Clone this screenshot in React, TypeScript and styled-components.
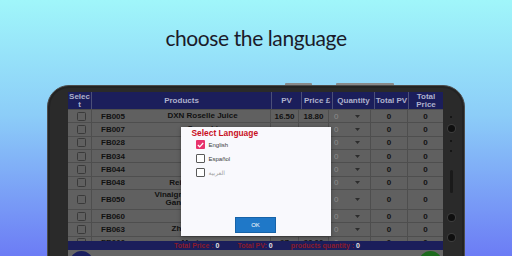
import styled, { createGlobalStyle } from "styled-components";

type product = {
  code: string;
  name: string;
  pv: string;
  price: string;
  tall?: boolean;
};

const products: product[] = [
  { code: "FB005", name: "DXN Roselle Juice", pv: "16.50", price: "18.80" },
  { code: "FB007", name: "Cocozhi", pv: "12.00", price: "14.20" },
  { code: "FB028", name: "Morinzhi", pv: "21.00", price: "24.60" },
  { code: "FB034", name: "Spica Tea", pv: "9.50", price: "11.40" },
  { code: "FB044", name: "Lingzhi", pv: "14.00", price: "16.30" },
  { code: "FB048", name: "Reishi Coffee Mix", pv: "18.00", price: "20.90" },
  {
    code: "FB050",
    name: "Vinaigrette Dressing with\nGanoderma Extract",
    pv: "11.00",
    price: "13.10",
    tall: true,
  },
  { code: "FB060", name: "Zhi Mocha", pv: "15.00", price: "17.50" },
  { code: "FB063", name: "Zhi Cafe Classic", pv: "15.00", price: "17.50" },
  { code: "FB066", name: "Morinzyme", pv: "27", price: "33.00" },
];

const GlobalStyle = createGlobalStyle`
  html, body {
    margin: 0;
    padding: 0;
  }
  body {
    width: 512px;
    height: 256px;
    overflow: hidden;
    font-family: "Liberation Sans", Arial, sans-serif;
  }
`;

const Page = styled.div`
  width: 512px;
  height: 256px;
  overflow: hidden;
  background: linear-gradient(180deg, #a0f6fa 0%, #8ccdf8 45%, #6c7cf5 100%);
  display: flex;
  flex-direction: column;
  align-items: center;
`;

const Title = styled.h1`
  margin: 22.5px 0 0;
  font-family: Lato, "Open Sans", sans-serif;
  font-weight: 400;
  font-size: 21px;
  letter-spacing: -0.4px;
  line-height: 29px;
  color: #1b1b2a;
`;

const Phone = styled.div`
  position: relative;
  flex-shrink: 0;
  box-sizing: border-box;
  margin-top: 33.5px;
  width: 418px;
  height: 230px;
  display: flex;
  background: #2a2a2a;
  border: 1px solid #4c4c4c;
  border-radius: 22px;
  box-shadow: inset 0 0 0 2px #232323;
`;

const SideKey = styled.span<{ $left: number; $width: number }>`
  position: absolute;
  top: -3px;
  left: ${(p) => p.$left}px;
  width: ${(p) => p.$width}px;
  height: 2px;
  border-radius: 1px 1px 0 0;
  background: #8a8a8a;
`;

const LeftBezel = styled.div`
  width: 20px;
  flex-shrink: 0;
`;

const RightBezel = styled.div`
  width: 21px;
  flex-shrink: 0;
  box-sizing: border-box;
  padding-right: 5px;
  display: flex;
  flex-direction: column;
  align-items: center;
`;

const Sensor = styled.span<{ $size: number; $top: number; $ring?: boolean }>`
  display: block;
  flex-shrink: 0;
  margin-top: ${(p) => p.$top}px;
  width: ${(p) => p.$size}px;
  height: ${(p) => p.$size}px;
  border-radius: 50%;
  background: #0f0f0f;
  box-shadow: ${(p) => (p.$ring ? "0 0 0 1px #3d3d3d" : "none")};
`;

const Slot = styled.span`
  display: block;
  margin-top: 18px;
  width: 3px;
  height: 23px;
  border-radius: 2px;
  background: #1a1a1a;
`;

const Screen = styled.div`
  position: relative;
  margin-top: 6px;
  width: 375px;
  height: 220px;
  flex-shrink: 0;
  display: flex;
  flex-direction: column;
  background: #636363;
  overflow: hidden;
`;

const HeaderRow = styled.div`
  display: grid;
  grid-template-columns: 23px 179px 29px 30px 41px 33px 34px;
  gap: 1px;
  height: 17px;
  background: #4b4f78;
`;

const HeadCell = styled.div<{ $breakAll?: boolean }>`
  display: flex;
  align-items: center;
  justify-content: center;
  text-align: center;
  background: #1b1e5b;
  color: #aeb1cc;
  font-size: 8px;
  font-weight: 700;
  line-height: 8px;
  word-break: ${(p) => (p.$breakAll ? "break-all" : "normal")};
`;

const Body = styled.div`
  height: 132px;
  flex-shrink: 0;
  overflow: hidden;
  padding-top: 1px;
  box-sizing: border-box;
  display: flex;
  flex-direction: column;
  gap: 1px;
  background: #4e4e4e;
`;

const Row = styled.div<{ $tall?: boolean }>`
  display: grid;
  grid-template-columns: 23px 178px 27px 29px 41px 36px 35px;
  gap: 1px;
  flex-shrink: 0;
  height: ${(p) => (p.$tall ? "19px" : "12.33px")};
`;

const Cell = styled.div<{ $align?: "start" | "center" }>`
  display: flex;
  align-items: center;
  justify-content: ${(p) => (p.$align === "start" ? "flex-start" : "center")};
  background: #606060;
  color: #111;
  font-size: 8px;
  font-weight: 700;
  white-space: nowrap;
`;

const CheckCell = styled(Cell)`
  padding-left: 4px;
`;

const Box = styled.span`
  width: 9px;
  height: 9px;
  box-sizing: border-box;
  border: 1px solid #3a3a3a;
  border-radius: 1.5px;
`;

const ProductCell = styled.div`
  display: grid;
  grid-template-columns: 43px 1fr;
  align-items: center;
  background: #606060;
  color: #111;
  font-size: 8px;
  font-weight: 700;
`;

const Code = styled.span`
  padding-left: 9px;
`;

const Name = styled.span`
  text-align: center;
  white-space: pre-line;
  line-height: 8px;
`;

const QtyCell = styled(Cell)`
  padding-left: 5px;
  gap: 17px;
  font-weight: 400;
  color: #8c8c8c;
`;

const TotalBar = styled.div`
  height: 9px;
  flex-shrink: 0;
  display: flex;
  align-items: center;
  gap: 18px;
  padding-left: 106px;
  background: #1b1e5b;
  font-size: 7px;
  font-weight: 700;
  white-space: nowrap;
`;

const TotalLabel = styled.span`
  color: #8a1b2c;
`;

const TotalValue = styled.span`
  color: #e4e4e4;
`;

const Strip = styled.div`
  flex: 1;
  display: flex;
  justify-content: space-between;
  align-items: flex-start;
  padding: 1px 1px 0 2px;
  background: #656565;
`;

const Fab = styled.span<{ $tone: string }>`
  width: 23px;
  height: 23px;
  border-radius: 50%;
  background: ${(p) => p.$tone};
`;

const Overlay = styled.div`
  position: absolute;
  inset: 0;
  display: flex;
  justify-content: center;
  align-items: flex-start;
  padding-top: 34.7px;
`;

const Dialog = styled.div`
  width: 150px;
  height: 109.3px;
  box-sizing: border-box;
  display: flex;
  flex-direction: column;
  padding: 1px 0 3px 11px;
  background: #f9f9fd;
  box-shadow: 0 1px 4px rgba(0, 0, 0, 0.35);
`;

const DialogTitle = styled.div`
  color: #c8101e;
  font-size: 8.4px;
  font-weight: 700;
  line-height: 10px;
`;

const Option = styled.label<{ $muted?: boolean }>`
  display: flex;
  align-items: center;
  gap: 4px;
  height: 14px;
  padding-left: 4px;
  font-family: "Liberation Sans", "DejaVu Sans", sans-serif;
  font-size: 6px;
  color: ${(p) => (p.$muted ? "#a2a2a2" : "#3a3a3a")};
`;

const Tick = styled.span<{ $on?: boolean }>`
  display: flex;
  align-items: center;
  justify-content: center;
  width: 9px;
  height: 9px;
  box-sizing: border-box;
  border-radius: 1px;
  border: ${(p) => (p.$on ? "none" : "1.2px solid #5a5a5a")};
  background: ${(p) => (p.$on ? "#e8336d" : "#fff")};
`;

const OkButton = styled.button`
  margin-top: auto;
  margin-left: -11px;
  align-self: center;
  width: 41px;
  height: 16px;
  padding: 0;
  border: 1px solid #1763a8;
  background: #1f78c8;
  color: #fff;
  font-family: "Liberation Sans", Arial, sans-serif;
  font-size: 6px;
`;

const Caret = () => (
  <svg width="5" height="3" viewBox="0 0 5 3">
    <polygon points="0,0 5,0 2.5,3" fill="#2c2c2c" />
  </svg>
);

const CheckMark = () => (
  <svg width="7" height="6" viewBox="0 0 7 6">
    <polyline points="0.8,3 2.7,4.8 6.2,1" fill="none" stroke="#fff" strokeWidth="1.2" />
  </svg>
);

const languages = [
  { label: "English", on: true },
  { label: "Español" },
  { label: "العربية", muted: true },
];

const App = () => {
  return (
    <Page>
      <GlobalStyle />
      <Title>choose the language</Title>
      <Phone>
        <SideKey $left={237} $width={27} />
        <SideKey $left={288} $width={58} />
        <LeftBezel />
        <Screen>
          <HeaderRow>
            <HeadCell $breakAll>Select</HeadCell>
            <HeadCell>Products</HeadCell>
            <HeadCell>PV</HeadCell>
            <HeadCell>Price £</HeadCell>
            <HeadCell>Quantity</HeadCell>
            <HeadCell>Total PV</HeadCell>
            <HeadCell>Total Price</HeadCell>
          </HeaderRow>
          <Body>
            {products.map((p) => (
              <Row key={p.code} $tall={p.tall}>
                <CheckCell>
                  <Box />
                </CheckCell>
                <ProductCell>
                  <Code>{p.code}</Code>
                  <Name>{p.name}</Name>
                </ProductCell>
                <Cell>{p.pv}</Cell>
                <Cell>{p.price}</Cell>
                <QtyCell $align="start">
                  0
                  <Caret />
                </QtyCell>
                <Cell>0</Cell>
                <Cell>0</Cell>
              </Row>
            ))}
          </Body>
          <TotalBar>
            <span>
              <TotalLabel>Total Price : </TotalLabel>
              <TotalValue>0</TotalValue>
            </span>
            <span>
              <TotalLabel>Total PV: </TotalLabel>
              <TotalValue>0</TotalValue>
            </span>
            <span>
              <TotalLabel>products quantity : </TotalLabel>
              <TotalValue>0</TotalValue>
            </span>
          </TotalBar>
          <Strip>
            <Fab $tone="#1a1f60" />
            <Fab $tone="#1d6b1d" />
          </Strip>
          <Overlay>
            <Dialog>
              <DialogTitle>Select Language</DialogTitle>
              {languages.map((l) => (
                <Option key={l.label} $muted={l.muted}>
                  <Tick $on={l.on}>{l.on && <CheckMark />}</Tick>
                  {l.label}
                </Option>
              ))}
              <OkButton>OK</OkButton>
            </Dialog>
          </Overlay>
        </Screen>
        <RightBezel>
          <Sensor $size={2} $top={30} />
          <Sensor $size={7} $top={6.5} $ring />
          <Sensor $size={2} $top={8.5} />
          <Sensor $size={2} $top={8} />
          <Slot />
          <Sensor $size={7} $top={20.5} $ring />
          <Sensor $size={7} $top={13} $ring />
        </RightBezel>
      </Phone>
    </Page>
  );
};

export default App;
